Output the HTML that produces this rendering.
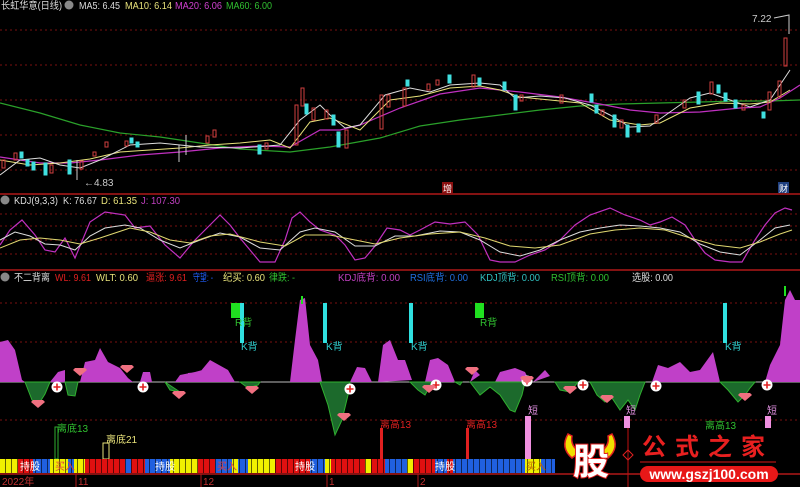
<!DOCTYPE html>
<html><head><meta charset="utf-8"><style>
html,body{margin:0;padding:0;background:#000;width:800px;height:487px;overflow:hidden}
svg{display:block}
text{font-family:"Liberation Sans","Noto Sans CJK SC",sans-serif}
</style></head><body>
<svg width="800" height="487" viewBox="0 0 800 487" xmlns="http://www.w3.org/2000/svg">
<rect width="800" height="487" fill="#000"/>
<g stroke="#7a1010" stroke-dasharray="2,3" stroke-width="1">
<line x1="0" y1="30" x2="800" y2="30"/><line x1="0" y1="65" x2="800" y2="65"/><line x1="0" y1="100" x2="800" y2="100"/><line x1="0" y1="135" x2="800" y2="135"/><line x1="0" y1="170" x2="800" y2="170"/>
<line x1="0" y1="214" x2="800" y2="214"/><line x1="0" y1="226" x2="800" y2="226"/><line x1="0" y1="240" x2="800" y2="240"/><line x1="0" y1="254" x2="800" y2="254"/>
<line x1="0" y1="303" x2="800" y2="303"/><line x1="0" y1="342" x2="800" y2="342"/><line x1="0" y1="420" x2="800" y2="420"/>
</g>
<line x1="0" y1="194" x2="800" y2="194" stroke="#b01818" stroke-width="1.5"/>
<line x1="0" y1="270" x2="800" y2="270" stroke="#b01818" stroke-width="1.5"/>
<line x1="0" y1="474" x2="800" y2="474" stroke="#b01818" stroke-width="1.5"/>

<circle cx="69" cy="5" r="4.5" fill="#888"/>
<text x="1" y="9" font-size="10" fill="#ddd" textLength="61" lengthAdjust="spacingAndGlyphs">长虹华意(日线)</text>
<text x="79" y="9" font-size="10" fill="#ddd" textLength="41" lengthAdjust="spacingAndGlyphs">MA5: 6.45</text>
<text x="125" y="9" font-size="10" fill="#e8e27a" textLength="47" lengthAdjust="spacingAndGlyphs">MA10: 6.14</text>
<text x="175" y="9" font-size="10" fill="#d040d0" textLength="47" lengthAdjust="spacingAndGlyphs">MA20: 6.06</text>
<text x="226" y="9" font-size="10" fill="#30c030" textLength="46" lengthAdjust="spacingAndGlyphs">MA60: 6.00</text>

<circle cx="5" cy="200" r="4.5" fill="#888"/>
<text x="14" y="204" font-size="10" fill="#ddd" textLength="44" lengthAdjust="spacingAndGlyphs">KDJ(9,3,3)</text>
<text x="63" y="204" font-size="10" fill="#ddd" textLength="34" lengthAdjust="spacingAndGlyphs">K: 76.67</text>
<text x="101" y="204" font-size="10" fill="#e8e27a" textLength="36" lengthAdjust="spacingAndGlyphs">D: 61.35</text>
<text x="141" y="204" font-size="10" fill="#c040c0" textLength="39" lengthAdjust="spacingAndGlyphs">J: 107.30</text>

<circle cx="5" cy="277" r="4.5" fill="#888"/>
<text x="14" y="281" font-size="10" fill="#ddd" textLength="36" lengthAdjust="spacingAndGlyphs">不二背离</text>
<text x="55" y="281" font-size="10" fill="#e02020" textLength="36" lengthAdjust="spacingAndGlyphs">WL: 9.61</text>
<text x="96" y="281" font-size="10" fill="#e8e27a" textLength="42" lengthAdjust="spacingAndGlyphs">WLT: 0.60</text>
<text x="146" y="281" font-size="10" fill="#e02020" textLength="41" lengthAdjust="spacingAndGlyphs">逼涨: 9.61</text>
<text x="193" y="281" font-size="10" fill="#2060ff" textLength="20" lengthAdjust="spacingAndGlyphs">守望: -</text>
<text x="223" y="281" font-size="10" fill="#e8e27a" textLength="42" lengthAdjust="spacingAndGlyphs">纪买: 0.60</text>
<text x="269" y="281" font-size="10" fill="#30c030" textLength="26" lengthAdjust="spacingAndGlyphs">律跌: -</text>
<text x="338" y="281" font-size="10" fill="#c040c0" textLength="62" lengthAdjust="spacingAndGlyphs">KDJ底背: 0.00</text>
<text x="410" y="281" font-size="10" fill="#2070e0" textLength="58" lengthAdjust="spacingAndGlyphs">RSI底背: 0.00</text>
<text x="480" y="281" font-size="10" fill="#30c0c0" textLength="60" lengthAdjust="spacingAndGlyphs">KDJ顶背: 0.00</text>
<text x="551" y="281" font-size="10" fill="#30c030" textLength="58" lengthAdjust="spacingAndGlyphs">RSI顶背: 0.00</text>
<text x="632" y="281" font-size="10" fill="#ddd" textLength="41" lengthAdjust="spacingAndGlyphs">选股: 0.00</text>

<polyline fill="none" stroke="#2aa02a" stroke-width="1.2" points="0,103 40,113 80,125 120,133 160,137 200,143 240,149 290,152 330,147 380,138 420,126 460,120 500,115 540,110 580,106 620,104 660,103 700,102 740,101 770,101 800,100"/>
<polyline fill="none" stroke="#c030c0" stroke-width="1.2" points="0,157 40,163 70,163 100,160 140,155 180,152 220,148 260,146 290,147 320,130 340,130 360,125 400,108 440,94 480,88 520,92 560,97 600,104 630,110 660,113 700,112 740,108 760,107 780,98 800,85"/>
<polyline fill="none" stroke="#e8e27a" stroke-width="1" points="0,160 30,165 60,163 90,159 120,152 150,150 180,148 210,145 240,143 270,140 290,148 310,122 330,118 360,130 390,100 420,96 450,88 480,86 500,90 520,97 550,100 580,103 610,120 640,125 660,123 690,108 720,103 750,104 770,102 790,90"/>
<polyline fill="none" stroke="#ddd" stroke-width="1" points="0,175 20,160 40,158 60,165 80,168 100,160 130,145 160,143 200,147 240,148 280,145 300,120 320,105 330,115 345,128 360,125 385,95 410,88 430,92 450,85 480,83 500,85 515,98 540,96 565,98 590,105 610,115 630,127 650,126 670,112 690,98 710,93 730,100 750,107 770,100 790,70"/>
<g stroke-width="1">
<g fill="none" stroke="#d04040">
<rect x="2" y="160" width="3" height="8"/><rect x="14" y="153" width="3" height="7"/><rect x="50" y="165" width="3" height="8"/><rect x="80" y="161" width="3" height="8"/><rect x="93" y="152" width="3" height="4"/><rect x="105" y="142" width="3" height="5"/><rect x="125" y="141" width="3" height="5"/><rect x="206" y="136" width="3" height="7"/><rect x="213" y="130" width="3" height="7"/><rect x="265" y="143" width="3" height="6"/><rect x="295" y="105" width="3" height="40"/><rect x="301" y="88" width="3" height="18"/><rect x="312" y="108" width="3" height="12"/><rect x="325" y="110" width="3" height="9"/><rect x="345" y="130" width="3" height="18"/><rect x="380" y="95" width="3" height="34"/><rect x="387" y="95" width="3" height="12"/><rect x="403" y="88" width="3" height="18"/><rect x="427" y="84" width="3" height="6"/><rect x="436" y="80" width="3" height="5"/><rect x="472" y="75" width="3" height="12"/><rect x="520" y="95" width="3" height="6"/><rect x="560" y="95" width="3" height="8"/><rect x="601" y="110" width="3" height="5"/><rect x="620" y="120" width="3" height="8"/><rect x="655" y="115" width="3" height="8"/><rect x="683" y="100" width="3" height="8"/><rect x="710" y="82" width="3" height="12"/><rect x="742" y="105" width="3" height="5"/><rect x="768" y="92" width="3" height="18"/><rect x="778" y="81" width="3" height="16"/><rect x="784" y="38" width="3" height="28"/>
</g>
<g fill="#40e0e0" stroke="#40e0e0">
<rect x="20" y="152" width="3" height="6"/><rect x="26" y="160" width="3" height="6"/><rect x="32" y="162" width="3" height="8"/><rect x="44" y="163" width="3" height="12"/><rect x="68" y="160" width="3" height="14"/><rect x="130" y="138" width="3" height="5"/><rect x="136" y="142" width="3" height="5"/><rect x="258" y="145" width="3" height="9"/><rect x="305" y="104" width="3" height="10"/><rect x="332" y="115" width="3" height="10"/><rect x="337" y="132" width="3" height="15"/><rect x="406" y="80" width="3" height="6"/><rect x="448" y="75" width="3" height="8"/><rect x="478" y="78" width="3" height="7"/><rect x="503" y="82" width="3" height="8"/><rect x="514" y="95" width="3" height="15"/><rect x="590" y="94" width="3" height="8"/><rect x="595" y="105" width="3" height="8"/><rect x="613" y="115" width="3" height="12"/><rect x="626" y="125" width="3" height="12"/><rect x="637" y="124" width="3" height="8"/><rect x="697" y="92" width="3" height="12"/><rect x="717" y="85" width="3" height="8"/><rect x="724" y="93" width="3" height="8"/><rect x="734" y="100" width="3" height="8"/><rect x="762" y="112" width="3" height="6"/>
</g>
<g stroke="#ccc"><line x1="186" y1="135" x2="186" y2="155"/><line x1="179" y1="145" x2="179" y2="162"/><line x1="77" y1="160" x2="77" y2="180"/></g>
</g>
<text x="84" y="186" font-size="10" fill="#ccc">←4.83</text>
<text x="752" y="22" font-size="10" fill="#ccc">7.22</text>
<polyline points="774,18 789,15 789,34" fill="none" stroke="#ccc"/>
<rect x="442" y="182" width="11" height="11" fill="#8b1010"/><text x="443" y="192" font-size="9" fill="#fff">增</text>
<rect x="778" y="182" width="11" height="11" fill="#204080"/><text x="779" y="192" font-size="9" fill="#fff">财</text>

<polyline fill="none" stroke="#c030c0" stroke-width="1.2" points="0,245 10,230 22,220 35,235 45,250 55,252 65,238 75,258 90,222 105,212 125,215 135,228 150,226 165,245 180,258 195,240 210,225 220,215 230,225 240,238 250,250 260,262 275,262 285,240 292,218 300,212 310,222 320,230 335,235 345,245 355,260 365,258 375,246 387,228 400,230 410,235 420,230 435,222 450,224 465,222 478,235 490,260 500,262 515,262 530,255 545,250 560,240 575,225 590,215 610,208 625,215 640,220 650,225 660,222 672,217 685,225 695,240 705,253 715,260 730,262 742,262 755,240 765,225 775,213 785,208 792,210"/>
<polyline fill="none" stroke="#ddd" stroke-width="1" points="0,240 15,232 30,236 45,244 60,245 75,250 90,236 105,228 125,225 140,228 160,240 180,248 200,240 220,233 240,237 260,248 280,250 300,232 315,228 335,232 355,246 375,246 395,236 415,236 440,231 460,232 480,240 500,252 520,256 540,250 560,240 580,232 600,228 620,225 640,226 660,228 680,232 700,244 720,252 740,255 760,240 775,228 790,225"/>
<polyline fill="none" stroke="#e0d870" stroke-width="1" points="0,248 20,240 40,238 60,240 80,244 100,238 130,228 150,232 170,240 190,243 210,236 230,234 260,242 285,246 305,235 330,235 355,240 375,244 400,238 430,234 460,232 485,238 510,246 535,248 560,245 590,234 615,230 640,228 665,230 690,238 715,245 740,248 760,242 780,234 792,230"/>

<line x1="0" y1="382" x2="800" y2="382" stroke="#bbb" stroke-width="1"/>
<path fill="#c040c8" d="M0,382 L0,342 L8,340 L15,350 L22,380 L25,382 Z M50,382 L58,372 L65,370 L65,382 Z M80,382 L85,362 L95,360 L100,348 L108,362 L120,368 L128,378 L133,382 Z M140,382 L143,372 L150,372 L152,382 Z M175,382 L180,375 L195,372 L210,368 L225,375 L230,382 Z M185,382 L188,373 L200,372 L210,360 L228,370 L235,382 Z M290,382 L295,340 L300,300 L305,298 L310,345 L318,360 L322,382 Z M350,382 L357,367 L365,368 L372,382 Z M378,382 L383,345 L390,340 L398,360 L405,360 L412,380 Z M425,382 L430,360 L438,358 L448,365 L455,382 Z M470,382 L475,370 L480,375 Z M495,382 L500,372 L515,368 L525,372 L530,382 Z M533,382 L545,370 L550,376 Z M652,382 L658,365 L668,368 L680,362 L690,372 L700,370 L713,352 L720,382 Z M730,382 L732,375 Z M765,382 L770,365 L780,345 L785,300 L790,290 L795,300 L800,300 L800,382 Z"/>
<path fill="#1c6a2c" stroke="#30b030" stroke-width="1" d="M25,382 L32,400 L38,405 L45,394 L50,382 Z M65,382 L68,395 L75,396 L78,382 Z M165,382 L170,390 L180,392 Z M240,382 L248,388 L258,385 L260,382 Z M320,382 L328,405 L335,435 L342,420 L348,395 L350,382 Z M410,382 L418,390 L425,395 L430,386 L432,382 Z M455,382 L460,385 L462,382 Z M470,382 L480,395 L490,387 L500,395 L510,410 L515,412 L522,395 L525,382 Z M555,382 L560,390 L570,392 L578,382 Z M590,382 L597,395 L605,402 L612,398 L620,410 L628,400 L635,410 L640,395 L645,382 Z M720,382 L728,390 L738,402 L745,395 L750,388 L755,382 Z"/>
<rect x="231" y="303" width="11" height="15" fill="#20e020"/><rect x="240" y="303" width="4" height="40" fill="#30e0e0"/>
<rect x="323" y="303" width="4" height="40" fill="#30e0e0"/>
<rect x="409" y="303" width="4" height="40" fill="#30e0e0"/>
<rect x="475" y="303" width="9" height="15" fill="#20e020"/>
<rect x="723" y="303" width="4" height="40" fill="#30e0e0"/>
<rect x="301" y="296" width="2" height="8" fill="#20e020"/><rect x="784" y="286" width="2" height="10" fill="#20e020"/>
<g font-size="10" fill="#30d0d0"><text x="241" y="350">K背</text><text x="326" y="350">K背</text><text x="411" y="350">K背</text><text x="725" y="350">K背</text></g>
<g font-size="10" fill="#30c030"><text x="235" y="326">R背</text><text x="480" y="326">R背</text></g>
<g>
<g transform="translate(57,387)"><circle r="5.5" fill="#fff"/><path d="M-3.5,0H3.5M0,-3.5V3.5" stroke="#e02020" stroke-width="1.6"/></g>
<g transform="translate(143,387)"><circle r="5.5" fill="#fff"/><path d="M-3.5,0H3.5M0,-3.5V3.5" stroke="#e02020" stroke-width="1.6"/></g>
<g transform="translate(350,389)"><circle r="5.5" fill="#fff"/><path d="M-3.5,0H3.5M0,-3.5V3.5" stroke="#e02020" stroke-width="1.6"/></g>
<g transform="translate(436,385)"><circle r="5.5" fill="#fff"/><path d="M-3.5,0H3.5M0,-3.5V3.5" stroke="#e02020" stroke-width="1.6"/></g>
<g transform="translate(527,381)"><circle r="5.5" fill="#fff"/><path d="M-3.5,0H3.5M0,-3.5V3.5" stroke="#e02020" stroke-width="1.6"/></g>
<g transform="translate(583,385)"><circle r="5.5" fill="#fff"/><path d="M-3.5,0H3.5M0,-3.5V3.5" stroke="#e02020" stroke-width="1.6"/></g>
<g transform="translate(656,386)"><circle r="5.5" fill="#fff"/><path d="M-3.5,0H3.5M0,-3.5V3.5" stroke="#e02020" stroke-width="1.6"/></g>
<g transform="translate(767,385)"><circle r="5.5" fill="#fff"/><path d="M-3.5,0H3.5M0,-3.5V3.5" stroke="#e02020" stroke-width="1.6"/></g>
</g>
<g fill="#f07080">
<path d="M33,400 h10 l2,2 -7,6 -7,-6z"/><path d="M75,368 h10 l2,2 -7,6 -7,-6z"/><path d="M174,391 h10 l2,2 -7,6 -7,-6z"/><path d="M247,386 h10 l2,2 -7,6 -7,-6z"/><path d="M339,413 h10 l2,2 -7,6 -7,-6z"/><path d="M424,385 h10 l2,2 -7,6 -7,-6z"/><path d="M467,367 h10 l2,2 -7,6 -7,-6z"/><path d="M522,376 h10 l2,2 -7,6 -7,-6z"/><path d="M565,386 h10 l2,2 -7,6 -7,-6z"/><path d="M602,395 h10 l2,2 -7,6 -7,-6z"/><path d="M740,393 h10 l2,2 -7,6 -7,-6z"/><path d="M122,365 h10 l2,2 -7,6 -7,-6z"/>
</g>
<rect x="55" y="427" width="3" height="32" fill="none" stroke="#30b030"/>
<text x="57" y="432" font-size="10" fill="#30c030">离底13</text>
<rect x="103" y="443" width="6" height="16" fill="none" stroke="#e8e27a"/>
<text x="106" y="443" font-size="10" fill="#e8e27a">离底21</text>
<rect x="380" y="428" width="3" height="31" fill="#e02020"/><text x="380" y="428" font-size="10" fill="#e02020">离高13</text>
<rect x="466" y="428" width="3" height="31" fill="#e02020"/><text x="466" y="428" font-size="10" fill="#e02020">离高13</text>
<rect x="525" y="416" width="6" height="43" fill="#f090e0"/><text x="528" y="414" font-size="10" fill="#e090e0">短</text>
<rect x="624" y="416" width="6" height="12" fill="#f090e0"/><text x="626" y="414" font-size="10" fill="#e090e0">短</text>
<rect x="765" y="416" width="6" height="12" fill="#f090e0"/><text x="767" y="414" font-size="10" fill="#e090e0">短</text>
<text x="705" y="429" font-size="10" fill="#30c030">离高13</text>

<g>
<rect x="0" y="459" width="18" height="14" fill="#f0f000"/>
<rect x="18" y="459" width="15" height="14" fill="#e01010"/>
<rect x="33" y="459" width="17" height="14" fill="#2060e0"/>
<rect x="50" y="459" width="18" height="14" fill="#f0f000"/>
<rect x="68" y="459" width="6" height="14" fill="#2060e0"/>
<rect x="74" y="459" width="11" height="14" fill="#f0f000"/>
<rect x="85" y="459" width="40" height="14" fill="#e01010"/>
<rect x="125" y="459" width="6" height="14" fill="#2060e0"/>
<rect x="131" y="459" width="14" height="14" fill="#e01010"/>
<rect x="145" y="459" width="25" height="14" fill="#2060e0"/>
<rect x="170" y="459" width="28" height="14" fill="#f0f000"/>
<rect x="198" y="459" width="17" height="14" fill="#e01010"/>
<rect x="215" y="459" width="17" height="14" fill="#2060e0"/>
<rect x="232" y="459" width="6" height="14" fill="#f0f000"/>
<rect x="238" y="459" width="10" height="14" fill="#2060e0"/>
<rect x="248" y="459" width="27" height="14" fill="#f0f000"/>
<rect x="275" y="459" width="35" height="14" fill="#e01010"/>
<rect x="310" y="459" width="15" height="14" fill="#2060e0"/>
<rect x="325" y="459" width="6" height="14" fill="#f0f000"/>
<rect x="331" y="459" width="34" height="14" fill="#e01010"/>
<rect x="365" y="459" width="6" height="14" fill="#f0f000"/>
<rect x="371" y="459" width="14" height="14" fill="#e01010"/>
<rect x="385" y="459" width="22" height="14" fill="#2060e0"/>
<rect x="407" y="459" width="6" height="14" fill="#f0f000"/>
<rect x="413" y="459" width="22" height="14" fill="#e01010"/>
<rect x="435" y="459" width="12" height="14" fill="#2060e0"/>
<rect x="447" y="459" width="6" height="14" fill="#e01010"/>
<rect x="453" y="459" width="72" height="14" fill="#2060e0"/>
<rect x="525" y="459" width="16" height="14" fill="#f0f000"/>
<rect x="541" y="459" width="14" height="14" fill="#2060e0"/>
<rect x="0" y="459" width="555" height="14" fill="url(#sep)"/>
</g>
<defs><pattern id="sep" width="6" height="14" patternUnits="userSpaceOnUse"><rect x="5" y="0" width="1" height="14" fill="#000" opacity="0.6"/></pattern></defs>
<g font-size="10" fill="#fff"><text x="20" y="470">持股</text><text x="155" y="470">持股</text><text x="295" y="470">持股</text><text x="435" y="470">持股</text></g>
<g font-size="10" fill="#e04040"><text x="55" y="470">买入</text><text x="217" y="470">买入</text></g>
<text x="526" y="470" font-size="10" fill="#c06000">买入</text>
<g stroke="#b01818"><line x1="76" y1="474" x2="76" y2="487"/><line x1="201" y1="474" x2="201" y2="487"/><line x1="327" y1="474" x2="327" y2="487"/><line x1="418" y1="474" x2="418" y2="487"/></g>
<g font-size="10" fill="#c03030"><text x="2" y="485">2022年</text><text x="78" y="485">11</text><text x="203" y="485">12</text><text x="329" y="485">1</text><text x="420" y="485">2</text></g>

<path d="M568,434 Q560,448 572,458 L580,452 Q570,446 572,436 Z" fill="#f0e000" stroke="#e02020" stroke-width="1.5"/>
<path d="M612,434 Q620,448 608,458 L600,452 Q610,446 608,436 Z" fill="#f0e000" stroke="#e02020" stroke-width="1.5"/>
<text x="573" y="474" font-size="36" font-weight="bold" fill="#fff" stroke="#e02020" stroke-width="2" paint-order="stroke" font-family="'Noto Sans CJK SC',sans-serif">股</text>
<line x1="628" y1="428" x2="628" y2="487" stroke="#c01010"/>
<path d="M628,450 l5,5 -5,5 -5,-5z" fill="none" stroke="#e02020"/>
<text x="642" y="455" font-size="24" font-weight="bold" fill="#e82020" letter-spacing="9" font-family="'Noto Serif CJK SC','Noto Sans CJK SC',serif">公式之家</text>
<line x1="640" y1="462" x2="776" y2="462" stroke="#901010" stroke-width="1.5"/>
<rect x="640" y="466" width="138" height="16" rx="8" fill="#e81818"/>
<text x="709" y="479" font-size="14" font-weight="bold" fill="#fff" text-anchor="middle">www.gszj100.com</text>
</svg>
</body></html>
